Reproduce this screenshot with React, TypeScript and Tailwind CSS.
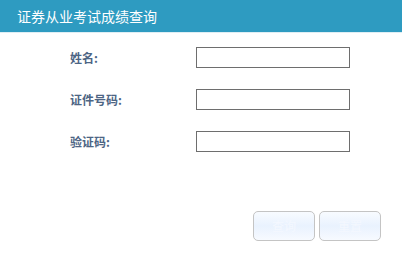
export default function App() {
  const rows = ["姓名:", "证件号码:", "验证码:"];
  return (
    <div
      className="w-[402px] h-[255px] bg-white"
      style={{ fontFamily: '"Microsoft YaHei", "Noto Sans CJK SC", sans-serif' }}
    >
      {/* Title bar */}
      <div className="h-[33px] bg-[#2e9bc1] flex items-center pl-[17px] text-[14px] text-white border-b border-[#dfeef4]">
        证券从业考试成绩查询
      </div>

      {/* Form */}
      <div className="flex flex-col gap-[21px] pt-[14px]">
        {rows.map((label) => (
          <div key={label} className="flex items-center h-[21px]">
            <div className="w-[196px] pl-[70px] text-[12px] font-bold text-[#4d6584]">{label}</div>
            <input className="w-[154px] h-[21px] border border-[#6e6e6e] bg-white outline-none" />
          </div>
        ))}
      </div>

      {/* Buttons */}
      <div className="flex gap-[4px] pl-[253px] pt-[59px]">
        <button className="w-[62px] h-[30px] rounded-[5px] border border-[#c4c4c4] bg-gradient-to-b from-[#f8fbff] via-[#e9f2fe] to-[#f7faff] text-[12px] text-[#f4f8ff]">
          查询
        </button>
        <button className="w-[62px] h-[30px] rounded-[5px] border border-[#c4c4c4] bg-gradient-to-b from-[#f8fbff] via-[#e9f2fe] to-[#f7faff] text-[12px] text-[#f4f8ff]">
          重置
        </button>
      </div>
    </div>
  );
}
